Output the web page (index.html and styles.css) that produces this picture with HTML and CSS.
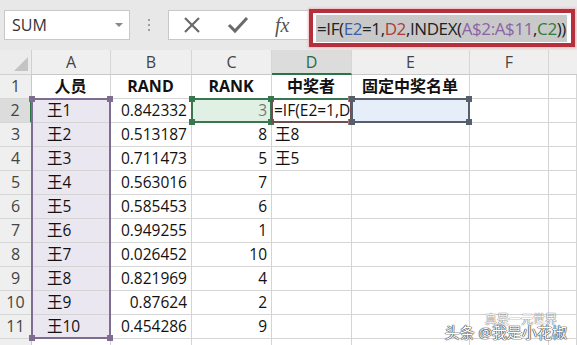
FILE: index.html
```html
<!DOCTYPE html>
<html lang="zh-CN">
<head>
  <meta charset="UTF-8">
  <title>Excel 抽奖</title>
  <link rel="stylesheet" href="styles.css">
</head>
<body>
  <div class="toolbar">
    <div class="namebox">
      <span>SUM</span>
      <span class="caret"></span>
    </div>
    <div class="grip"><i></i><i></i><i></i></div>
    <div class="fbar">
      <div class="fbtns">
        <svg width="18" height="18" viewBox="0 0 18 18"><path d="M2 2 L16 16 M16 2 L2 16" stroke="#6a6a6a" stroke-width="2.2" fill="none"/></svg>
        <svg width="22" height="18" viewBox="0 0 22 18"><path d="M2 9 L8 15 L20 2" stroke="#6a6a6a" stroke-width="3" fill="none"/></svg>
        <span class="fx">fx</span>
      </div>
      <div class="formula">
        <span class="ftext">=IF(<b class="c-e">E2</b>=1,<b class="c-d">D2</b>,INDEX(<b class="c-a">A$2:A$11</b>,<b class="c-c">C2</b>))</span>
      </div>
    </div>
  </div>

  <div class="sheet-wrap">
    <div class="sheet">
      <div class="corner"></div>
      <div class="colh">A</div>
      <div class="colh">B</div>
      <div class="colh">C</div>
      <div class="colh active">D</div>
      <div class="colh">E</div>
      <div class="colh">F</div>
      <div class="colh last"></div>

      <div class="rowh">1</div>
      <div class="cell c head">人员</div>
      <div class="cell c head">RAND</div>
      <div class="cell c head">RANK</div>
      <div class="cell c head">中奖者</div>
      <div class="cell c head">固定中奖名单</div>
      <div class="cell"></div>
      <div class="cell"></div>

      <div class="rowh active">2</div>
      <div class="cell name">王1</div>
      <div class="cell r">0.842332</div>
      <div class="cell r">3</div>
      <div class="cell edit">=IF(E2=1,D2,INDEX(A$2:A$11,C2))</div>
      <div class="cell"></div>
      <div class="cell"></div>
      <div class="cell"></div>

      <div class="rowh">3</div>
      <div class="cell name">王2</div>
      <div class="cell r">0.513187</div>
      <div class="cell r">8</div>
      <div class="cell">王8</div>
      <div class="cell"></div>
      <div class="cell"></div>
      <div class="cell"></div>

      <div class="rowh">4</div>
      <div class="cell name">王3</div>
      <div class="cell r">0.711473</div>
      <div class="cell r">5</div>
      <div class="cell">王5</div>
      <div class="cell"></div>
      <div class="cell"></div>
      <div class="cell"></div>

      <div class="rowh">5</div>
      <div class="cell name">王4</div>
      <div class="cell r">0.563016</div>
      <div class="cell r">7</div>
      <div class="cell"></div>
      <div class="cell"></div>
      <div class="cell"></div>
      <div class="cell"></div>

      <div class="rowh">6</div>
      <div class="cell name">王5</div>
      <div class="cell r">0.585453</div>
      <div class="cell r">6</div>
      <div class="cell"></div>
      <div class="cell"></div>
      <div class="cell"></div>
      <div class="cell"></div>

      <div class="rowh">7</div>
      <div class="cell name">王6</div>
      <div class="cell r">0.949255</div>
      <div class="cell r">1</div>
      <div class="cell"></div>
      <div class="cell"></div>
      <div class="cell"></div>
      <div class="cell"></div>

      <div class="rowh">8</div>
      <div class="cell name">王7</div>
      <div class="cell r">0.026452</div>
      <div class="cell r">10</div>
      <div class="cell"></div>
      <div class="cell"></div>
      <div class="cell"></div>
      <div class="cell"></div>

      <div class="rowh">9</div>
      <div class="cell name">王8</div>
      <div class="cell r">0.821969</div>
      <div class="cell r">4</div>
      <div class="cell"></div>
      <div class="cell"></div>
      <div class="cell"></div>
      <div class="cell"></div>

      <div class="rowh">10</div>
      <div class="cell name">王9</div>
      <div class="cell r">0.87624</div>
      <div class="cell r">2</div>
      <div class="cell"></div>
      <div class="cell"></div>
      <div class="cell"></div>
      <div class="cell"></div>

      <div class="rowh">11</div>
      <div class="cell name">王10</div>
      <div class="cell r">0.454286</div>
      <div class="cell r">9</div>
      <div class="cell"></div>
      <div class="cell"></div>
      <div class="cell"></div>
      <div class="cell"></div>

      <div class="rowh"></div>
      <div class="cell"></div>
      <div class="cell"></div>
      <div class="cell"></div>
      <div class="cell"></div>
      <div class="cell"></div>
      <div class="cell"></div>
      <div class="cell"></div>
    </div>

    <!-- rangos referenciados en la fórmula -->
    <div class="sheet overlay">
      <div class="ref ref-a"><i class="h tl"></i><i class="h tr"></i><i class="h bl"></i><i class="h br"></i></div>
      <div class="ref ref-c"><i class="h tl"></i><i class="h tr"></i><i class="h bl"></i><i class="h br"></i></div>
      <div class="ref ref-d"><i class="h tr"></i><i class="h br"></i></div>
      <div class="ref ref-e"><i class="h tl"></i><i class="h tr"></i><i class="h bl"></i><i class="h br"></i></div>
    </div>
  </div>

  <div class="mark">
    <span class="mark-sub">真是一元世界</span>
    <span class="mark-main">头条 @我是小花椒</span>
  </div>
</body>
</html>
```

FILE: styles.css
```css
body {
  margin: 0;
  width: 577px;
  height: 345px;
  overflow: hidden;
  background: #fff;
  font-family: "Open Sans", "Noto Sans CJK SC", sans-serif;
  position: relative;
}

/* barra de fórmulas */
.toolbar {
  height: 50px;
  background: #e8e8e8;
  display: flex;
  align-items: flex-start;
  padding-top: 10px;
  padding-left: 4px;
  box-sizing: border-box;
}

.namebox {
  width: 126px;
  height: 30px;
  box-sizing: border-box;
  background: #fff;
  border: 1px solid #c8c8c8;
  display: flex;
  align-items: center;
  justify-content: space-between;
  padding: 0 6px 0 7px;
  font-family: "Open Sans", sans-serif;
  font-size: 16px;
  color: #333;
}

.caret {
  width: 0;
  height: 0;
  border-left: 4px solid transparent;
  border-right: 4px solid transparent;
  border-top: 4px solid #888;
}

.grip {
  width: 38px;
  height: 30px;
  display: flex;
  flex-direction: column;
  align-items: center;
  justify-content: center;
  gap: 3px;
}

.grip i {
  width: 2px;
  height: 2px;
  background: #a0a0a0;
}

.fbar {
  flex: 1;
  display: flex;
  align-items: flex-start;
}

.fbtns {
  width: 141px;
  height: 30px;
  box-sizing: border-box;
  background: #fff;
  border: 1px solid #c8c8c8;
  border-right: none;
  display: flex;
  align-items: center;
  gap: 26px;
  padding-left: 14px;
}

.fx {
  font-family: "Liberation Serif", serif;
  font-style: italic;
  font-size: 20px;
  color: #555;
}

.formula {
  flex: 1;
  height: 38px;
  margin-top: -1px;
  box-sizing: border-box;
  border: 4px solid #b3303c;
  box-shadow: 0 0 2px 1px #f2b6bb;
  background: #fff;
  margin-right: 2px;
  display: flex;
  align-items: center;
  padding-left: 3px;
}

.ftext {
  background: #c9c9c9;
  font-size: 17px;
  color: #222;
  padding: 2px 1px;
  letter-spacing: -0.4px;
  white-space: nowrap;
}

.ftext b { font-weight: normal; }
.c-e { color: #3c5ea9; }
.c-d { color: #b03a3a; }
.c-a { color: #8a63a6; }
.c-c { color: #2e7d3c; }

/* hoja */
.sheet-wrap {
  position: relative;
}

.sheet {
  display: grid;
  grid-template-columns: 32px 79px 81px 80px 80px 118px 79px 28px;
  grid-template-rows: 25px repeat(12, 24px);
  font-size: 15.5px;
  color: #111;
}

.overlay {
  position: absolute;
  left: 0;
  top: 0;
  right: 0;
  bottom: 0;
  pointer-events: none;
}

.corner {
  background: #ececec;
  border-right: 1px solid #d0d0d0;
  border-bottom: 1px solid #d0d0d0;
  position: relative;
}

.corner::after {
  content: "";
  position: absolute;
  right: 3px;
  bottom: 3px;
  border-left: 14px solid transparent;
  border-bottom: 14px solid #c4c4c4;
}

.colh {
  background: #efefef;
  border-right: 1px solid #d6d6d6;
  border-bottom: 1px solid #c8c8c8;
  text-align: center;
  line-height: 25px;
  color: #444;
  font-size: 16px;
}

.colh.active {
  background: #dcdcdc;
  border-bottom: 2px solid #2b7445;
  color: #2a6a3e;
}

.colh.last { border-right: none; }

.rowh {
  background: #efefef;
  border-right: 1px solid #c8c8c8;
  border-bottom: 1px solid #d6d6d6;
  text-align: center;
  line-height: 23px;
  color: #444;
  font-size: 16px;
}

.rowh.active {
  background: #dcdcdc;
  border-right: 2px solid #2b7445;
}

.cell {
  border-right: 1px solid #d4d4d4;
  border-bottom: 1px solid #d4d4d4;
  line-height: 23px;
  padding: 0 4px 0 3px;
  white-space: nowrap;
  overflow: hidden;
}

.c { text-align: center; }
.r { text-align: right; }
.head { font-weight: bold; font-size: 16px; }
.name { padding-left: 15px; background: #ebe7f1; }
.edit { text-overflow: clip; padding-left: 2px; }

/* rangos referenciados */
.ref {
  position: relative;
  box-sizing: border-box;
  margin: -1px 0 0 -1px;
}

.ref-a { grid-column: 2; grid-row: 3 / 13; border: 2px solid #7e6c92; }
.ref-c { grid-column: 4; grid-row: 3; border: 2px solid #3a7650; background: rgba(196, 225, 204, 0.5); }
.ref-d { grid-column: 5; grid-row: 3; border: 2px solid #6e5050; border-top-color: #3a7650; }
.ref-e { grid-column: 6; grid-row: 3; border: 2px solid #56606c; background: rgba(214, 228, 245, 0.6); }

.h {
  position: absolute;
  width: 6px;
  height: 6px;
}

.ref-a .h { background: #7e6c92; }
.ref-c .h { background: #3a7650; }
.ref-d .h { background: #9e7a7a; }
.ref-e .h { background: #56606c; }

.tl { left: -4px; top: -4px; }
.tr { right: -4px; top: -4px; }
.bl { left: -4px; bottom: -4px; }
.br { right: -4px; bottom: -4px; }

/* marca de agua */
.mark {
  position: absolute;
  right: 10px;
  bottom: 5px;
  display: flex;
  flex-direction: column;
  align-items: flex-end;
  line-height: 1;
}

.mark-sub {
  font-size: 12px;
  color: #fff;
  text-shadow: 0 0 1px #555, 0 0 1px #555;
  margin-right: 10px;
  margin-bottom: -1px;
}

.mark-main {
  font-size: 15px;
  color: #fff;
  text-shadow: 0 0 1px #222, 0 0 1px #222, 0 0 1px #222;
}
```
